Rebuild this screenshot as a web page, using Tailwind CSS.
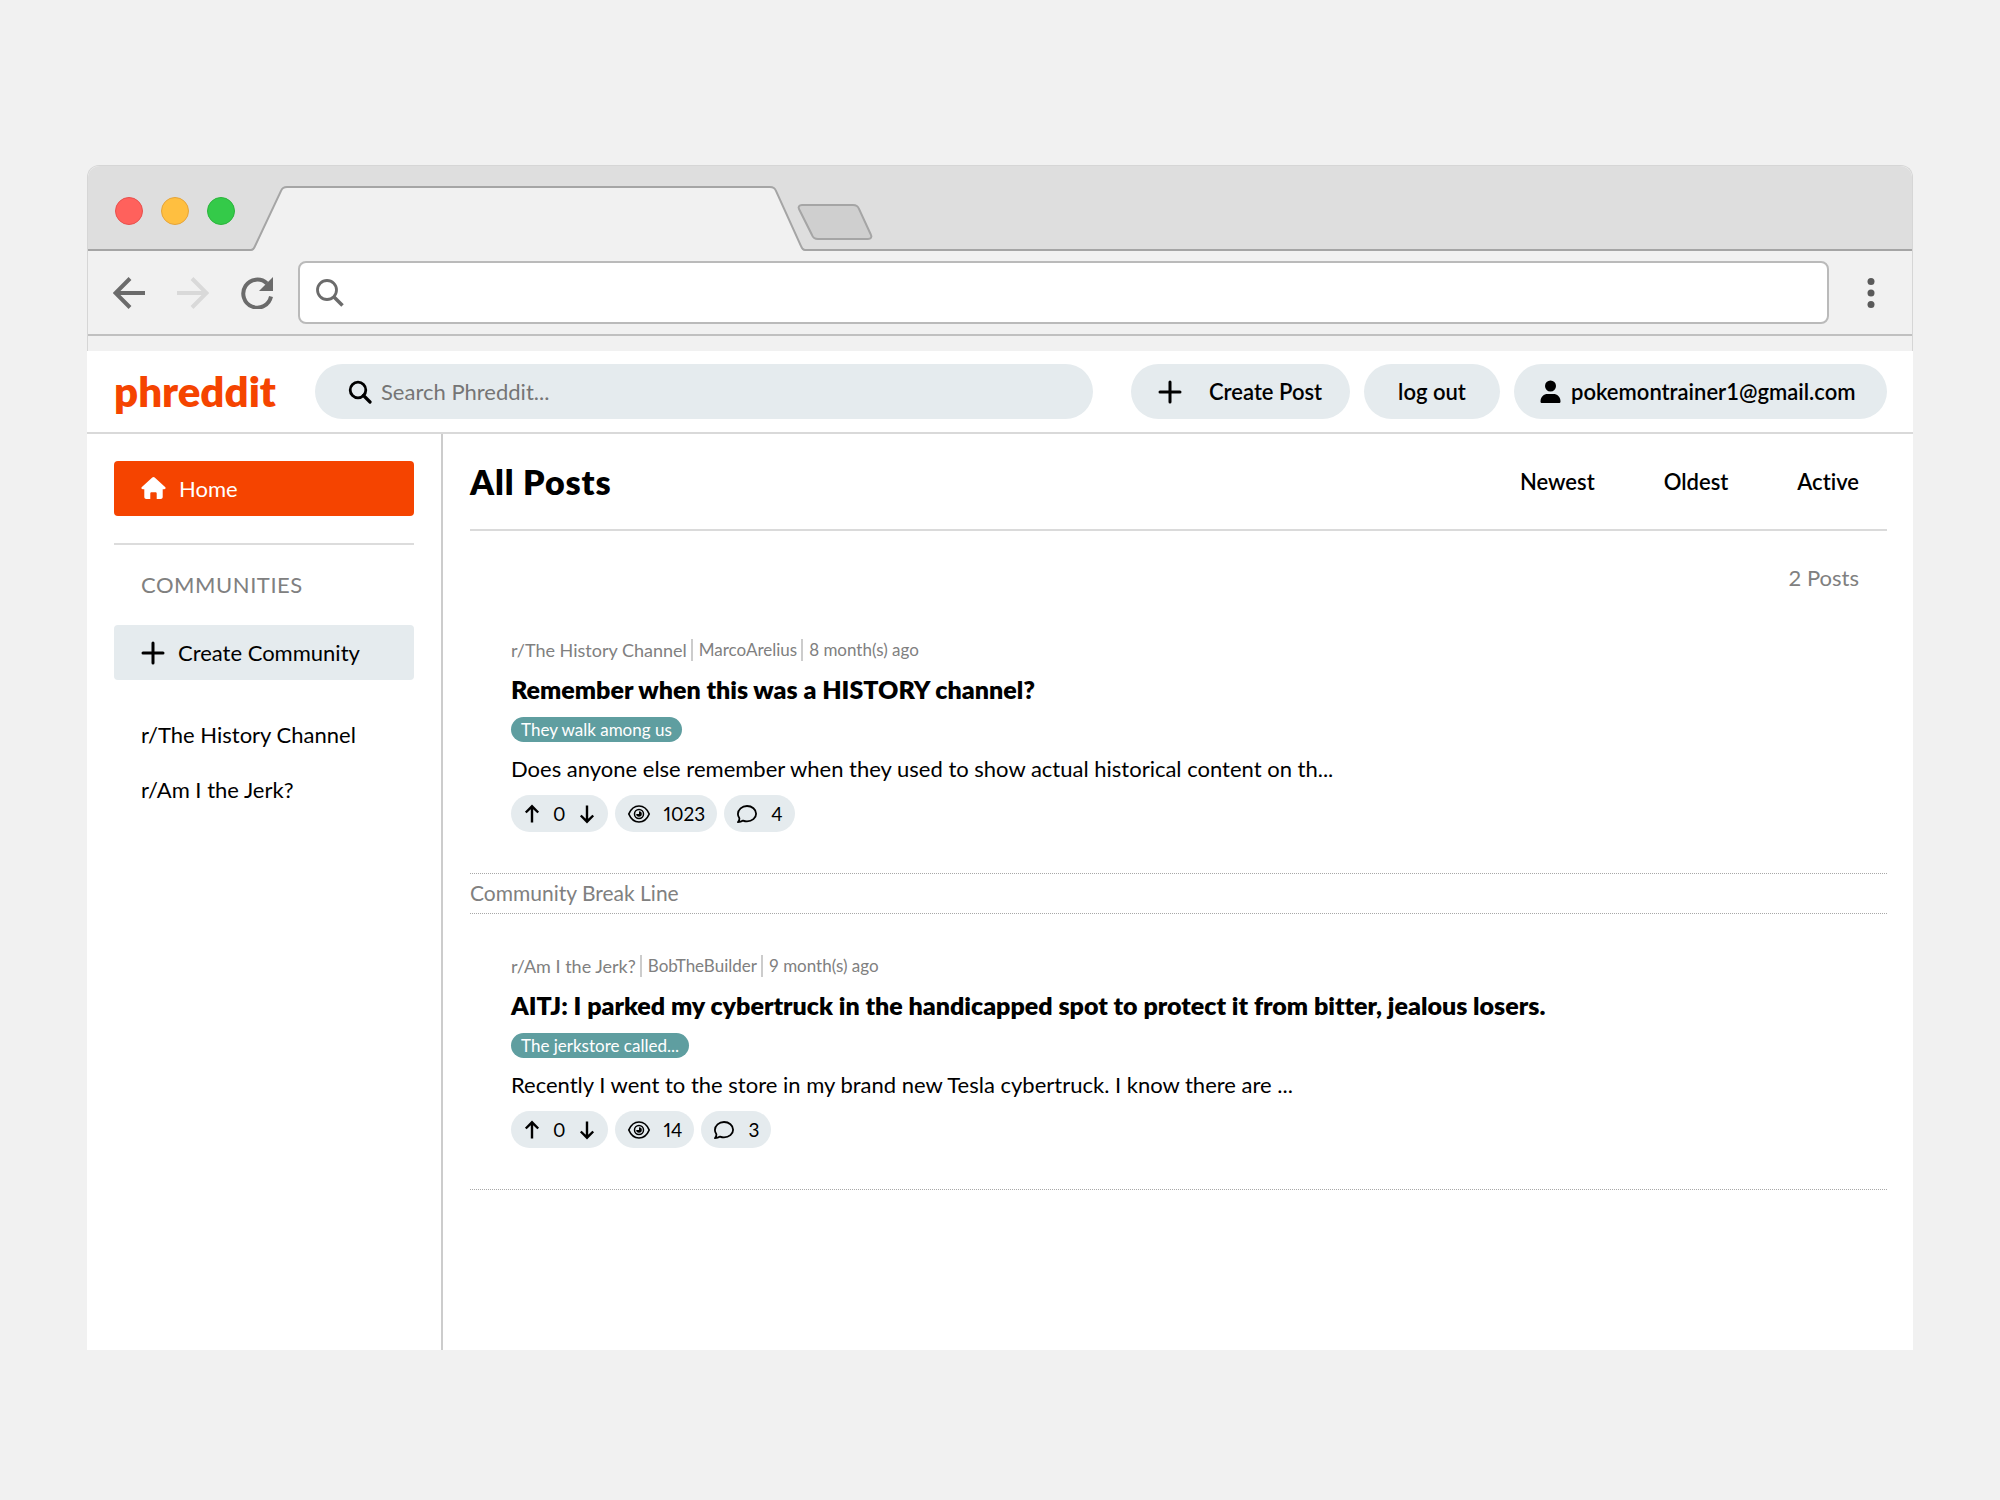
<!DOCTYPE html>
<html lang="en">
<head>
<meta charset="utf-8">
<title>phreddit</title>
<script src="https://cdn.jsdelivr.net/npm/@tailwindcss/browser@4"></script>
</head>
<body class="min-h-screen bg-[#f1f1f1] px-[87px] pt-[165px] pb-[150px] font-['Lato',sans-serif] text-[22px] leading-7 text-black [font-variant-ligatures:none]">
<svg class="hidden">
  <symbol id="plus" viewBox="0 0 24 24"><path d="M12 2v20M2 12h20" fill="none" stroke="currentColor" stroke-width="3" stroke-linecap="round"/></symbol>
  <symbol id="up" viewBox="0 0 20 20"><path d="M10 18.500V2.500M3.800 8.500 10 2.300l6.200 6.200" fill="none" stroke="currentColor" stroke-width="2.400"/></symbol>
  <symbol id="down" viewBox="0 0 20 20"><path d="M10 1.500V17.500M3.800 11.500 10 17.700l6.200-6.200" fill="none" stroke="currentColor" stroke-width="2.400"/></symbol>
  <symbol id="eye" viewBox="0 0 24 20"><path d="M1.800 10C3.800 5.200 7.300 2 12 2s8.200 3.200 10.200 8c-2 4.800-5.500 8-10.200 8S3.800 14.800 1.800 10Z" fill="none" stroke="currentColor" stroke-width="1.700"/><circle cx="12" cy="10" r="4.500" fill="none" stroke="currentColor" stroke-width="1.500"/><path d="M12 10V7.200A2.800 2.800 0 1 1 9.200 10Z" fill="currentColor"/></symbol>
  <symbol id="comment" viewBox="0 0 22 20"><path d="M2 18.200c1-1.200 1.500-2.500 1.400-4C2.500 13 1.900 11.500 1.900 10c0-4.500 4.100-8 9.100-8s9.100 3.500 9.100 7.700-4.100 7.700-9.100 7.700c-1.400 0-2.700-.3-3.900-.8-1.400 1-3.100 1.600-5.100 1.600Z" fill="none" stroke="currentColor" stroke-width="1.800" stroke-linejoin="round"/></symbol>
</svg>

<div class="flex flex-col">
  <!-- browser chrome -->
  <div class="rounded-t-xl border border-b-0 border-[#d6d6d6] bg-[#f1f1f1]">
    <div class="flex h-[85px] items-end rounded-t-xl border-b-2 border-[#a5a5a5] bg-[#dedede]">
      <div class="mb-6 ml-[27px] flex gap-[18px]">
        <span class="size-7 rounded-full border border-[#e8504d] bg-[#ff615c]"></span>
        <span class="size-7 rounded-full border border-[#e5a43a] bg-[#ffbf40]"></span>
        <span class="size-7 rounded-full border border-[#2bb53c] bg-[#34ca49]"></span>
      </div>
      <svg class="-mb-[2px] ml-4 h-[66px] w-[554px]" viewBox="0 0 554 66"><path d="M0 66v-1c2 0 4-1 5-4L30 6c1-3 3-4 6-4h483c3 0 5 1 6 4l25 55c1 3 2 4 4 4v1Z" fill="#f1f1f1"/><path d="M0 65c2 0 3-1 4-4L30 6c1-3 3-4 6-4h483c3 0 5 1 6 4l25 55c1 3 2 4 4 4" fill="none" stroke="#a5a5a5" stroke-width="2"/></svg>
      <svg class="-ml-2 mb-2 h-[38px] w-[78px]" viewBox="0 0 78 38"><path d="M5 2h51c3 0 5 1 6 4l12 26c1 2 0 4-3 4H21c-3 0-5-1-6-4L2 6c-1-2 0-4 3-4Z" fill="#cfcfcf" stroke="#a5a5a5" stroke-width="2"/></svg>
    </div>
    <div class="flex h-[85px] items-center border-b-2 border-[#c0c0c0] pl-[25px] text-[#6b6b6b]">
      <button aria-label="Back"><svg class="size-8" viewBox="0 0 32 32"><path d="M32 16H3M17 1.500 2.500 16 17 30.500" fill="none" stroke="currentColor" stroke-width="4"/></svg></button>
      <button aria-label="Forward" class="ml-8 text-[#d9d9d9]"><svg class="size-8" viewBox="0 0 32 32"><path d="M0 16h29M15 1.500 29.500 16 15 30.500" fill="none" stroke="currentColor" stroke-width="4"/></svg></button>
      <button aria-label="Reload" class="ml-8"><svg class="size-8" viewBox="0 0 32 32"><path d="M30 19.500A14 14 0 1 1 26 6.500" fill="none" stroke="currentColor" stroke-width="4"/><path d="M32 0v14H18Z" fill="currentColor"/></svg></button>
      <label class="ml-[25px] flex h-[63px] flex-1 items-center rounded-lg border-2 border-[#bababa] bg-white pl-4">
        <svg class="size-7" viewBox="0 0 28 28" fill="none" stroke="#6b6b6b"><circle cx="11" cy="11" r="9.500" stroke-width="2.800"/><path d="m17.500 17.500 9 9" stroke-width="3.600"/></svg>
        <input type="text" aria-label="Address" class="min-w-0 flex-1 outline-none">
      </label>
      <button aria-label="Menu" class="mr-[37px] ml-[38px]"><svg class="h-8 w-2" viewBox="0 0 8 32" fill="#5a5a5a"><circle cx="4" cy="4.500" r="3.500"/><circle cx="4" cy="16" r="3.500"/><circle cx="4" cy="27.500" r="3.500"/></svg></button>
    </div>
    <div class="h-[15px]"></div>
  </div>

  <!-- site header -->
  <header class="flex h-[83px] items-center border-b-2 border-[#d9d9d9] bg-white pr-[26px] pl-[27px]">
    <a href="#" class="w-[201px] pb-[2px] text-[42px] leading-[50px] font-extrabold text-[#f54400]">phreddit</a>
    <label class="flex h-[55px] flex-1 items-center rounded-full bg-[#e5ebee] pl-[33px]">
      <svg class="size-6" viewBox="0 0 24 24" fill="none" stroke="#000"><circle cx="10" cy="10" r="7.800" stroke-width="2.800"/><path d="m15.500 15.500 6.500 6.500" stroke-width="3.200" stroke-linecap="round"/></svg>
      <input type="search" aria-label="Search Phreddit" placeholder="Search Phreddit..." class="ml-[9px] min-w-0 flex-1 outline-none placeholder:text-[#757575]">
    </label>
    <div class="ml-[38px] flex gap-[14px] font-semibold">
      <button class="flex h-[55px] w-[219px] items-center gap-[27px] rounded-full bg-[#e5ebee] pl-[27px]"><svg class="size-6"><use href="#plus"/></svg>Create Post</button>
      <button class="h-[55px] w-[136px] rounded-full bg-[#e5ebee]">log out</button>
      <button class="flex h-[55px] w-[373px] items-center gap-[10px] rounded-full bg-[#e5ebee] pl-[26px]"><svg class="h-6 w-[21px]" viewBox="0 0 21 24"><circle cx="10.500" cy="6" r="5.500"/><path d="M.5 21.500C.5 16.500 4 14 7.500 14h6c3.500 0 7 2.500 7 7.500 0 1-.6 1.500-1.500 1.500H2c-.9 0-1.500-.5-1.500-1.500Z"/></svg>pokemontrainer1@gmail.com</button>
    </div>
  </header>

  <div class="flex min-h-[916px] bg-white">
    <nav class="w-[356px] shrink-0 border-r-2 border-[#cccccc] px-[27px] pt-[27px]">
      <a href="#" class="flex h-[55px] items-center gap-[13px] rounded bg-[#f54400] pl-[27px] text-white"><svg class="size-[25px]" viewBox="0 0 25 25" fill="currentColor"><path d="M11.300 1.500.9 11c-1 1-.5 2.300.9 2.300h1.500V21c0 1.200.8 2 2 2h4v-5.500c0-.8.500-1.300 1.300-1.300h3.800c.8 0 1.300.5 1.300 1.300V23h4c1.200 0 2-.8 2-2v-7.700h1.500c1.400 0 1.900-1.300.9-2.300L13.700 1.500c-.8-.7-1.600-.7-2.400 0Z"/></svg>Home</a>
      <hr class="mt-[27px] border-t-2 border-[#dcdcdc]">
      <h2 class="mt-[26px] pl-[27px] tracking-wide text-[#808080]">COMMUNITIES</h2>
      <button class="mt-[26px] flex h-[55px] w-full items-center gap-[13px] rounded bg-[#e5ebee] pl-[27px]"><svg class="size-6"><use href="#plus"/></svg>Create Community</button>
      <ul class="mt-[41px] space-y-[27px] pl-[27px]">
        <li><a href="#">r/The History Channel</a></li>
        <li><a href="#">r/Am I the Jerk?</a></li>
      </ul>
    </nav>

    <main class="min-w-0 flex-1 pr-[26px] pl-[27px]">
      <div class="flex h-[97px] items-center border-b-2 border-[#dadada]">
        <h1 class="flex-1 text-[34px] leading-10 font-extrabold tracking-wide">All Posts</h1>
        <div class="mr-7 flex gap-[69px] font-semibold">
          <button>Newest</button><button>Oldest</button><button>Active</button>
        </div>
      </div>
      <p class="mt-[33px] mr-7 text-right text-[#808080]">2 Posts</p>

      <article class="mt-[6px] flex flex-col items-start border-b border-dotted border-[#a8a8a8] p-[41px]">
        <div class="flex items-center text-[17px] leading-[22px] text-[#808080]"><span class="text-[18px]">r/The History Channel</span><span class="ml-1 border-l-2 border-[#cccccc] pl-[6px]">MarcoArelius</span><span class="ml-1 border-l-2 border-[#cccccc] pl-[6px]">8 month(s) ago</span></div>
        <h2 class="mt-3 text-[25px] leading-8 font-extrabold">Remember when this was a HISTORY channel?</h2>
        <span class="mt-3 rounded-full bg-[#5f9ea0] px-[10px] text-[17px] leading-[25px] text-white">They walk among us</span>
        <p class="mt-[13px]">Does anyone else remember when they used to show actual historical content on th...</p>
        <div class="mt-3 flex gap-[7px] text-[19px] proportional-nums">
          <div class="flex h-[37px] items-center gap-[11px] rounded-full bg-[#e5ebee] px-[11px]"><button aria-label="Upvote"><svg class="size-5"><use href="#up"/></svg></button>0<button aria-label="Downvote"><svg class="size-5"><use href="#down"/></svg></button></div>
          <div class="flex h-[37px] items-center gap-[13px] rounded-full bg-[#e5ebee] px-3"><svg class="h-5 w-6"><use href="#eye"/></svg>1023</div>
          <div class="flex h-[37px] items-center gap-[13px] rounded-full bg-[#e5ebee] px-3"><svg class="h-5 w-[22px]"><use href="#comment"/></svg>4</div>
        </div>
      </article>

      <p class="border-b border-dotted border-[#a8a8a8] pt-[5px] pb-[6px] text-[21px] text-[#808080]">Community Break Line</p>

      <article class="flex flex-col items-start border-b border-dotted border-[#a8a8a8] p-[41px]">
        <div class="flex items-center text-[17px] leading-[22px] text-[#808080]"><span class="text-[18px]">r/Am I the Jerk?</span><span class="ml-1 border-l-2 border-[#cccccc] pl-[6px]">BobTheBuilder</span><span class="ml-1 border-l-2 border-[#cccccc] pl-[6px]">9 month(s) ago</span></div>
        <h2 class="mt-3 text-[25px] leading-8 font-extrabold">AITJ: I parked my cybertruck in the handicapped spot to protect it from bitter, jealous losers.</h2>
        <span class="mt-3 rounded-full bg-[#5f9ea0] px-[10px] text-[17px] leading-[25px] text-white">The jerkstore called...</span>
        <p class="mt-[13px]">Recently I went to the store in my brand new Tesla cybertruck. I know there are ...</p>
        <div class="mt-3 flex gap-[7px] text-[19px] proportional-nums">
          <div class="flex h-[37px] items-center gap-[11px] rounded-full bg-[#e5ebee] px-[11px]"><button aria-label="Upvote"><svg class="size-5"><use href="#up"/></svg></button>0<button aria-label="Downvote"><svg class="size-5"><use href="#down"/></svg></button></div>
          <div class="flex h-[37px] items-center gap-[13px] rounded-full bg-[#e5ebee] px-3"><svg class="h-5 w-6"><use href="#eye"/></svg>14</div>
          <div class="flex h-[37px] items-center gap-[13px] rounded-full bg-[#e5ebee] px-3"><svg class="h-5 w-[22px]"><use href="#comment"/></svg>3</div>
        </div>
      </article>
    </main>
  </div>
</div>
</body>
</html>
